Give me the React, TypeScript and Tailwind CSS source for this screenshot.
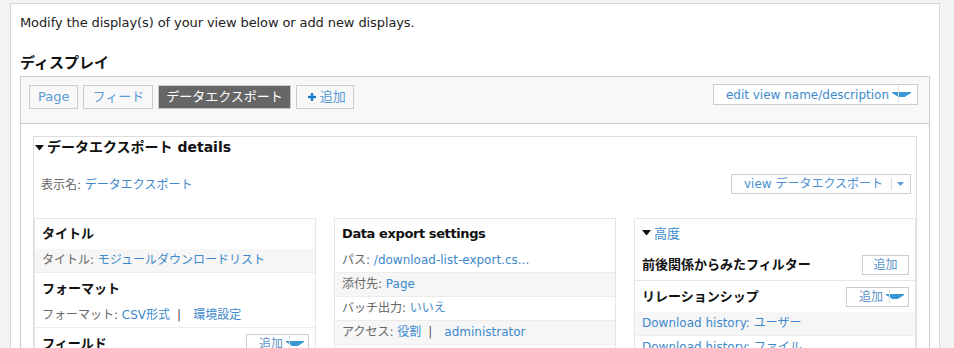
import React from "react";

const LINK = "text-[#3d89cc]";

function Tri({ className = "" }: { className?: string }) {
  return (
    <svg width="9" height="6" viewBox="0 0 9 6" className={className}>
      <polygon points="0,0 9,0 4.5,5.5" fill="#111" />
    </svg>
  );
}

function WideArrow({ w = 19 }: { w?: number }) {
  return (
    <svg width={w} height="7" viewBox="0 0 19 7" preserveAspectRatio="none">
      <path d="M0 1 H19 V2 L12.5 6 H6.5 L0 2 Z" fill="#3a97d6" />
    </svg>
  );
}

function Plus() {
  return (
    <svg width="8" height="8" viewBox="0 0 8 8">
      <rect x="2.8" y="0" width="2.4" height="8" fill="#1f78c4" />
      <rect x="0" y="2.8" width="8" height="2.4" fill="#1f78c4" />
    </svg>
  );
}

function Tab({ children, active = false, className = "" }: { children: React.ReactNode; active?: boolean; className?: string }) {
  return (
    <div
      className={
        "h-[24px] border flex items-center text-[13px] " +
        (active ? "bg-[#666] border-[#c8c8c8] text-white px-[7px] " : "border-[#ccc] text-[#5a9ad6] px-[8px] ") +
        className
      }
    >
      {children}
    </div>
  );
}

function AddBtn({ arrow = false }: { arrow?: boolean }) {
  return arrow ? (
    <div className="h-[20px] w-[63px] border border-[#ccc] bg-white flex items-center pl-[12px] text-[12px] text-[#5b93cb] font-normal">
      <span>追加</span>
      <span className="ml-[3px] relative flex items-center">
        <WideArrow w={18} />
        <span className="absolute left-[3px] top-[-4px] w-px h-[14px] bg-[#e2e2e2]" />
      </span>
    </div>
  ) : (
    <div className="h-[20px] w-[47px] border border-[#ccc] bg-white flex items-center justify-center text-[12px] text-[#5b93cb] font-normal">
      追加
    </div>
  );
}

function H({ children, h, btn, border = false }: { children: React.ReactNode; h: string; btn?: React.ReactNode; border?: boolean }) {
  return (
    <div className={h + " flex items-center justify-between pl-[7px] pr-[6px] text-[13px] font-bold text-[#111] " + (border ? "border-b border-[#e6e6e6]" : "")}>
      <span>{children}</span>
      {btn}
    </div>
  );
}

function Row({ children, gray = false }: { children: React.ReactNode; gray?: boolean }) {
  return (
    <div
      className={
        "h-[24px] leading-[23px] border-b border-[#ececec] px-[7px] text-[12px] text-[#666] whitespace-nowrap overflow-hidden " +
        (gray ? "bg-[#f6f6f6]" : "bg-white")
      }
    >
      {children}
    </div>
  );
}

function Sep() {
  return <span className="ml-[7px] mr-[12px] text-[#555]">|</span>;
}

export default function App() {
  return (
    <div className="min-h-screen bg-[#f3f3f3] pt-[3px] pl-[10px] pr-[14px] font-['DejaVu_Sans','Noto_Sans_CJK_JP',sans-serif] text-[#222]">
      <div className="border border-[#d6d6d6] bg-white px-[9px] pt-[10px] pb-[40px]">
        <p className="text-[13px] leading-[18px] tracking-[-0.1px]">Modify the display(s) of your view below or add new displays.</p>
        <h2 className="mt-[21px] text-[15px] font-bold leading-[20px] text-[#111]">ディスプレイ</h2>
        <div className="mt-[3px] border border-[#ccc]">
          <div className="h-[47px] bg-[#f8f8f8] border-b border-[#ccc] flex justify-between items-start pl-[8px] pr-[11px] pt-[7px]">
            <div className="flex gap-[5px] mt-[1px]">
              <Tab>Page</Tab>
              <Tab>フィード</Tab>
              <Tab active>データエクスポート</Tab>
              <Tab className="!pl-[11px] !pr-[7px] gap-[4px]">
                <Plus />
                <span>追加</span>
              </Tab>
            </div>
            <div className="h-[21px] border border-[#ccc] bg-white flex items-center pl-[12px] pr-[6px] text-[12px] text-[#3d89cc]">
              <span>edit view name/description</span>
              <span className="ml-[3px] relative flex items-center">
                <WideArrow />
                <span className="absolute left-[6px] top-[-5px] w-px h-[17px] bg-[#e2e2e2]" />
              </span>
            </div>
          </div>
          <div className="px-[12px] pt-[12px] pb-[20px]">
            <div className="border border-[#ddd]">
              <div className="h-[21px] pl-[1px] flex items-center text-[14px] font-bold text-[#111]">
                <Tri className="mr-[3px]" />
                <span>データエクスポート details</span>
              </div>
              <div className="flex justify-between items-start pl-[7px] pr-[5px] pt-[16px] pb-[23px]">
                <div className="text-[12px] text-[#666] leading-[20px] mt-[1px]">
                  表示名: <span className={LINK}>データエクスポート</span>
                </div>
                <div className="h-[20px] w-[180px] border border-[#ccc] bg-white flex items-center pl-[12px] text-[12px] text-[#4a90d0]">
                  <span className="flex-1">view データエクスポート</span>
                  <span className="w-px h-[12px] bg-[#ddd]" />
                  <svg width="7" height="4" viewBox="0 0 7 4" className="ml-[5px] mr-[6px]">
                    <polygon points="0,0 7,0 3.5,4" fill="#5a9bd5" />
                  </svg>
                </div>
              </div>
              <div className="grid grid-cols-3 gap-[18px]">
                <div className="border border-[#e6e6e6]">
                  <H h="h-[30px]">タイトル</H>
                  <Row gray>
                    タイトル: <span className={LINK}>モジュールダウンロードリスト</span>
                  </Row>
                  <H h="h-[31px]">フォーマット</H>
                  <Row>
                    フォーマット: <span className={LINK}>CSV形式</span>
                    <Sep />
                    <span className={LINK}>環境設定</span>
                  </Row>
                  <H h="h-[31px]" btn={<AddBtn arrow />}>フィールド</H>
                  <Row gray>
                    <span className={LINK}>Download history: ユーザー</span>
                  </Row>
                  <Row>
                    <span className={LINK}>Download history: ファイル</span>
                  </Row>
                </div>
                <div className="border border-[#e6e6e6]">
                  <H h="h-[30px]">
                    <span className="tracking-[-0.4px]">Data export settings</span>
                  </H>
                  <Row>
                    パス: <span className={LINK}>/download-list-export.cs...</span>
                  </Row>
                  <Row gray>
                    添付先: <span className={LINK}>Page</span>
                  </Row>
                  <Row>
                    バッチ出力: <span className={LINK}>いいえ</span>
                  </Row>
                  <Row gray>
                    アクセス: <span className={LINK}>役割</span>
                    <Sep />
                    <span className={LINK}>administrator</span>
                  </Row>
                  <H h="h-[31px]">ヘッダー</H>
                </div>
                <div className="border border-[#e6e6e6]">
                  <div className="h-[30px] flex items-center pl-[7px] text-[13px]">
                    <Tri className="mr-[3px] -mt-[3px]" />
                    <span className={LINK}>高度</span>
                  </div>
                  <H h="h-[32px]" border btn={<AddBtn />}>
                    前後関係からみたフィルター
                  </H>
                  <H h="h-[31px]" btn={<AddBtn arrow />}>
                    リレーションシップ
                  </H>
                  <Row gray>
                    <span className={LINK}>Download history: ユーザー</span>
                  </Row>
                  <Row>
                    <span className={LINK}>Download history: ファイル</span>
                  </Row>
                </div>
              </div>
            </div>
          </div>
        </div>
      </div>
    </div>
  );
}
